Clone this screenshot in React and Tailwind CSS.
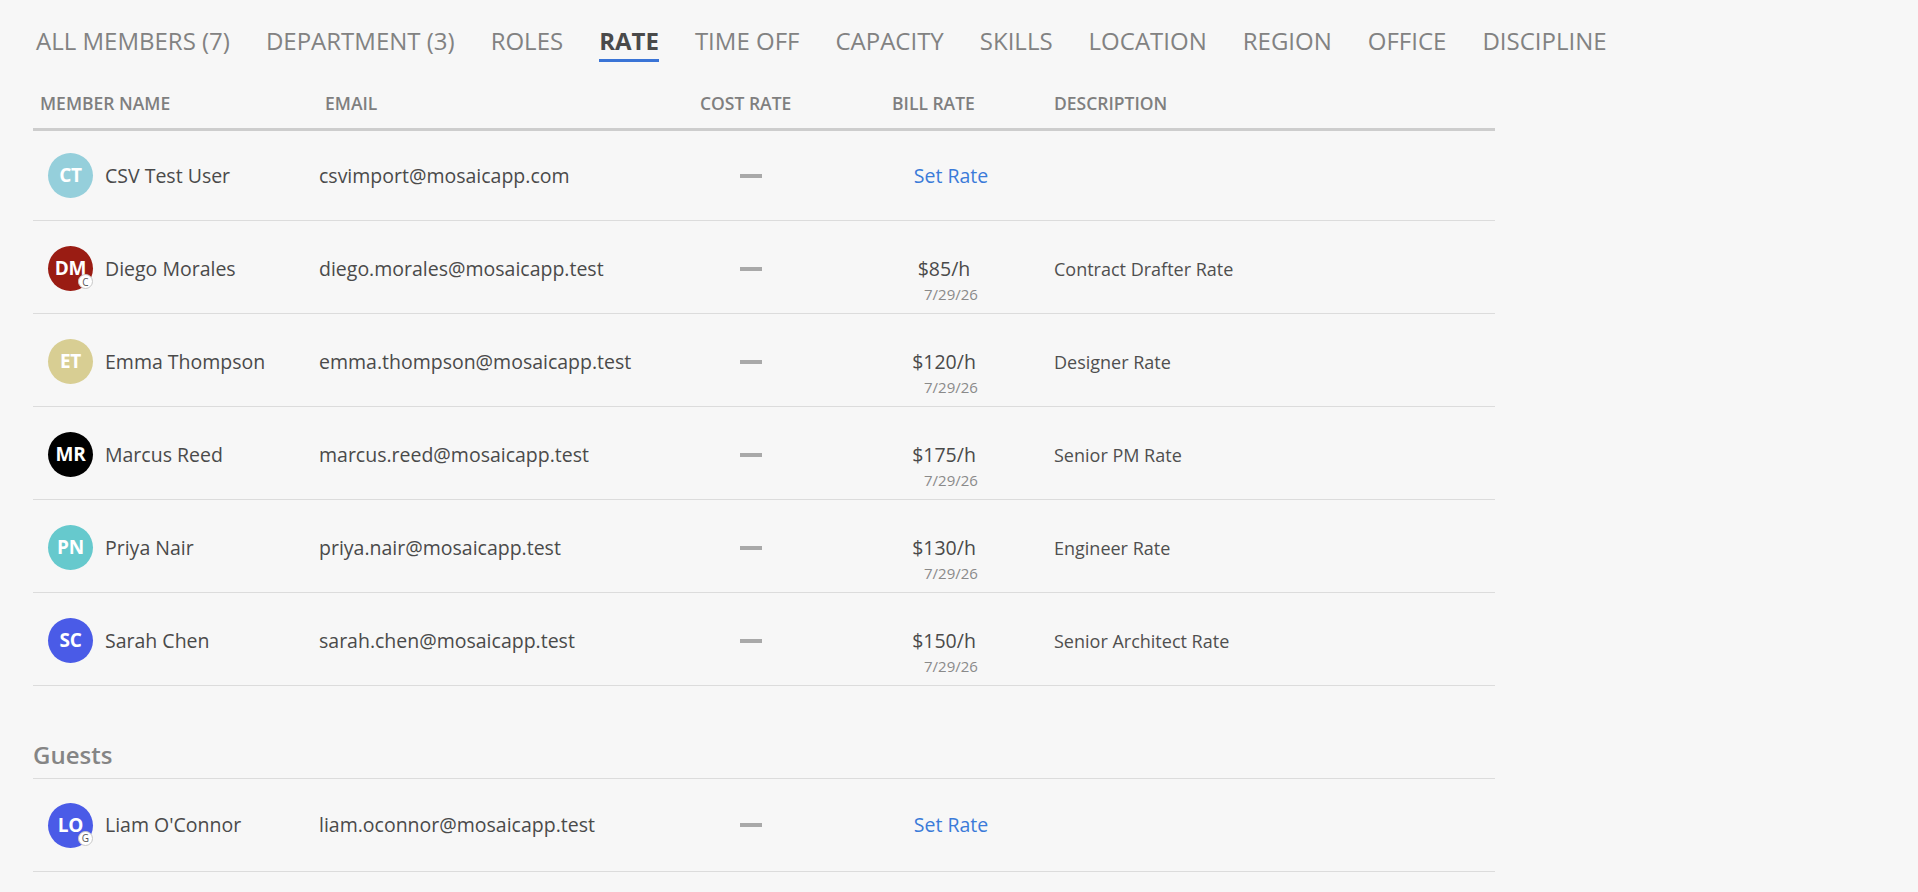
import React from "react";

const tabs = [
  "ALL MEMBERS (7)",
  "DEPARTMENT (3)",
  "ROLES",
  "RATE",
  "TIME OFF",
  "CAPACITY",
  "SKILLS",
  "LOCATION",
  "REGION",
  "OFFICE",
  "DISCIPLINE",
];

const members = [
  { i: "CT", name: "CSV Test User", email: "csvimport@mosaicapp.com", color: "bg-[#95cfdb]", rate: null, desc: "" },
  { i: "DM", name: "Diego Morales", email: "diego.morales@mosaicapp.test", color: "bg-[#9a1c13]", badge: "C", rate: "$85/h", desc: "Contract Drafter Rate" },
  { i: "ET", name: "Emma Thompson", email: "emma.thompson@mosaicapp.test", color: "bg-[#d8ce93]", rate: "$120/h", desc: "Designer Rate" },
  { i: "MR", name: "Marcus Reed", email: "marcus.reed@mosaicapp.test", color: "bg-black", rate: "$175/h", desc: "Senior PM Rate" },
  { i: "PN", name: "Priya Nair", email: "priya.nair@mosaicapp.test", color: "bg-[#66c9cd]", rate: "$130/h", desc: "Engineer Rate" },
  { i: "SC", name: "Sarah Chen", email: "sarah.chen@mosaicapp.test", color: "bg-[#4a5be7]", rate: "$150/h", desc: "Senior Architect Rate" },
];

const guests = [
  { i: "LO", name: "Liam O'Connor", email: "liam.oconnor@mosaicapp.test", color: "bg-[#4a5be7]", badge: "G", rate: null, desc: "" },
];

function Avatar({ m }) {
  return (
    <div className={`relative w-[45px] h-[45px] rounded-full ${m.color} flex items-center justify-center shrink-0`}>
      <span className="text-white font-bold text-[19px] leading-none tracking-[-0.3px]">{m.i}</span>
      {m.badge && (
        <span className="absolute right-0 bottom-[2px] w-[15px] h-[15px] rounded-full bg-white border border-[#c8c8c8] flex items-center justify-center text-[10px] leading-none text-[#555]">
          {m.badge}
        </span>
      )}
    </div>
  );
}

function Row({ m, first }) {
  return (
    <div
      className={`flex items-center border-b border-[#dcdcdc] ${first ? "h-[90px]" : "h-[93px]"} ${
        m.rate ? "pt-[3px]" : ""
      }`}
    >
      <div className="w-[286px] pl-[15px] flex items-center gap-[12px]">
        <Avatar m={m} />
        <span className="text-[19.5px] text-[#4a4a4a] leading-[26px]">{m.name}</span>
      </div>
      <div className="w-[361px] text-[19.5px] text-[#4a4a4a] leading-[26px]">{m.email}</div>
      <div className="w-[142px] flex justify-center">
        <div className="w-[22px] h-[4px] bg-[#a9a9a9]" />
      </div>
      <div className="w-[232px] pl-[26px] text-center">
        {m.rate ? (
          <div className="pt-[24px]">
            <div className="pr-[14px] text-[19.5px] leading-[26px] text-[#4a4a4a]">{m.rate}</div>
            <div className="text-[15px] leading-[24px] text-[#8a8a8a]">7/29/26</div>
          </div>
        ) : (
          <span className="text-[19.5px] leading-[26px] text-[#3b7bd9]">Set Rate</span>
        )}
      </div>
      <div className="flex-1 text-[18px] leading-[26px] text-[#4f4f4f]">{m.desc}</div>
    </div>
  );
}

export default function App() {
  return (
    <div
      className="w-[1918px] h-[892px] overflow-hidden bg-[#f7f7f7]"
      style={{ fontFamily: "'Open Sans', 'Noto Sans', sans-serif" }}
    >
      <div className="flex gap-[36px] pl-[36px] pt-[26px]">
        {tabs.map((t) => (
          <div
            key={t}
            className={`text-[24px] leading-[30px] pb-[3px] border-b-[3px] ${
              t === "RATE" ? "border-[#3a74d6] text-[#4a4a4a] font-bold" : "border-transparent text-[#828282]"
            }`}
          >
            {t}
          </div>
        ))}
      </div>

      <div className="ml-[33px] w-[1462px]">
        <div className="flex pt-[29px] pb-[13px] border-b-[3px] border-[#cdcdcd] text-[17.5px] leading-[24px] font-semibold text-[#7f7f7f]">
          <div className="w-[286px] pl-[7px]">MEMBER NAME</div>
          <div className="w-[361px] pl-[6px]">EMAIL</div>
          <div className="w-[142px] pl-[20px]">COST RATE</div>
          <div className="w-[232px] pl-[70px]">BILL RATE</div>
          <div className="flex-1">DESCRIPTION</div>
        </div>

        {members.map((m, idx) => (
          <Row key={m.i} m={m} first={idx === 0} />
        ))}

        <div className="h-[93px] flex items-end pb-[8px] border-b border-[#dcdcdc]">
          <span className="text-[24px] leading-[30px] font-semibold text-[#858585]">Guests</span>
        </div>

        {guests.map((m) => (
          <Row key={m.i} m={m} />
        ))}
      </div>
    </div>
  );
}
